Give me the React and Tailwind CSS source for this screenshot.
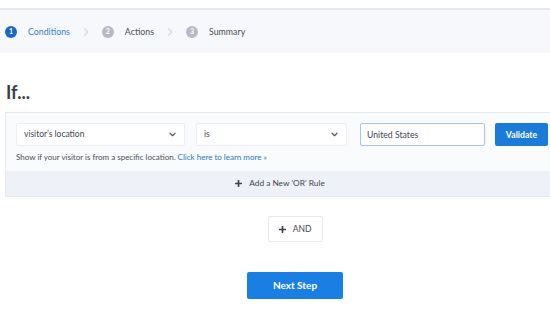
import React from 'react';

const font = { fontFamily: 'Lato, "Open Sans", sans-serif' };

function Chevron({ className }) {
  return (
    <svg viewBox="0 0 8 12" className={className} fill="none" stroke="currentColor" strokeWidth="1.8" strokeLinecap="round" strokeLinejoin="round">
      <path d="M2 1.5 6.5 6 2 10.5" />
    </svg>
  );
}

function Caret() {
  return (
    <svg viewBox="0 0 10 6" className="w-[7px] h-[5px] text-[#555b66]" fill="none" stroke="currentColor" strokeWidth="1.8" strokeLinecap="round" strokeLinejoin="round">
      <path d="M1.5 1.2 5 4.7 8.5 1.2" />
    </svg>
  );
}

function Plus() {
  return (
    <svg viewBox="0 0 10 10" className="w-[7px] h-[7px] text-[#3d424c]" fill="currentColor">
      <rect x="3.8" y="0" width="2.4" height="10" rx="0.6" />
      <rect x="0" y="3.8" width="10" height="2.4" rx="0.6" />
    </svg>
  );
}

function Step({ n, label, active }) {
  return (
    <div className="flex items-center gap-[11px]">
      <span
        className={`w-[12px] h-[12px] rounded-full flex items-center justify-center text-[7px] font-bold text-white ${active ? 'bg-[#1668c7]' : 'bg-[#b7bac6]'}`}
      >
        {n}
      </span>
      <span className={`text-[8.8px] ${active ? 'text-[#2f7fd1]' : 'text-[#4a4e57]'}`}>{label}</span>
    </div>
  );
}

export default function App() {
  return (
    <div className="w-[550px] h-[309px] overflow-hidden bg-white" style={font}>
      <div className="w-[590px]">
        {/* Steps bar */}
        <div className="mt-[8px] border-t-2 border-[#e7e8ef] bg-[#f7f8fc] h-[45px] flex items-center pl-[5px]">
          <Step n="1" label="Conditions" active />
          <Chevron className="w-[6px] h-[10px] text-[#d3d6de] ml-[13px] mr-[13px]" />
          <Step n="2" label="Actions" />
          <Chevron className="w-[6px] h-[10px] text-[#d3d6de] ml-[13px] mr-[13px]" />
          <Step n="3" label="Summary" />
        </div>

        <h2 className="mt-[27px] ml-[6px] text-[18px] font-bold text-[#3b3e45] leading-[24px]">If...</h2>

        {/* Rule box */}
        <div className="mt-[8px] ml-[5px] w-[560px] border border-[#e6e9f0] bg-[#fafbfd]">
          <div className="pt-[10px] pl-[10px] pb-[8px]">
            <div className="flex items-center">
              <div className="w-[169px] h-[23px] bg-white border border-[#eceef3] rounded-[2px] flex items-center justify-between pl-[7px] pr-[8px]">
                <span className="text-[8.5px] text-[#444852]">visitor’s location</span>
                <Caret />
              </div>
              <div className="ml-[11px] w-[151px] h-[23px] bg-white border border-[#eceef3] rounded-[2px] flex items-center justify-between pl-[7px] pr-[8px]">
                <span className="text-[8.5px] text-[#444852]">is</span>
                <Caret />
              </div>
              <div className="ml-[13px] w-[125px] h-[23px] bg-white border border-[#a8c3ea] rounded-[2px] flex items-center pl-[6px]">
                <span className="text-[8.7px] text-[#444852]">United States</span>
              </div>
              <button className="ml-[10px] w-[53px] h-[23px] bg-[#1b7bd9] rounded-[2px] text-white text-[8.7px] font-bold">
                Validate
              </button>
            </div>
            <p className="mt-[5px] text-[8px] text-[#4a4e57] leading-[12px]">
              Show if your visitor is from a specific location.{' '}
              <span className="text-[#1f77d0]">Click here to learn more »</span>
            </p>
          </div>
          <div className="h-[25px] bg-[#eef1f7] flex items-center justify-center gap-[7px] pr-[10px]">
            <Plus />
            <span className="text-[8.3px] text-[#444852]">Add a New 'OR' Rule</span>
          </div>
        </div>

        {/* AND */}
        <div className="flex justify-center mt-[19px]">
          <button className="w-[55px] h-[26px] bg-white border border-[#e6e8ee] rounded-[2px] flex items-center justify-center gap-[7px]">
            <Plus />
            <span className="text-[8.5px] text-[#444852]">AND</span>
          </button>
        </div>

        {/* Next Step */}
        <div className="flex justify-center mt-[30px]">
          <button className="w-[96px] h-[27px] bg-[#1a7fe3] rounded-[2px] text-white text-[10px] font-bold">
            Next Step
          </button>
        </div>
      </div>
    </div>
  );
}
